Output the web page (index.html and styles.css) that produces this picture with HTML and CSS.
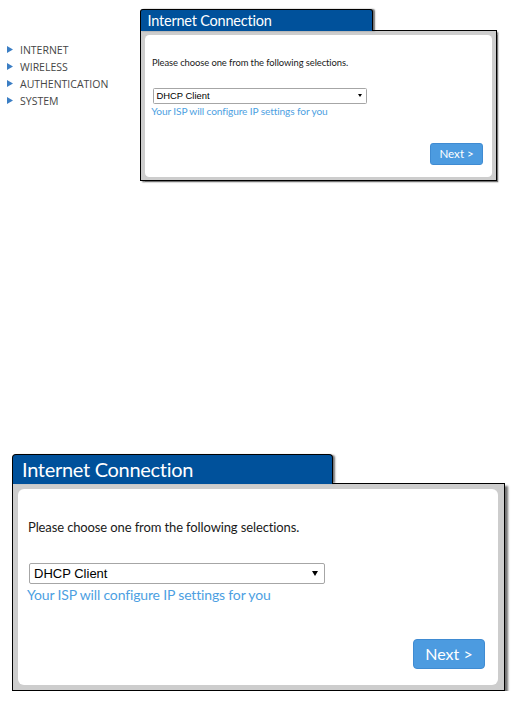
FILE: index.html
```html
<!DOCTYPE html>
<html lang="en">
<head>
<meta charset="utf-8">
<title>Internet Connection</title>
<link rel="stylesheet" href="styles.css">
</head>
<body>
<div class="top">
  <ul class="menu">
    <li><svg class="bullet" width="6" height="7" viewBox="0 0 6 7"><polygon points="0,0 6,3.5 0,7" fill="#3b7ec4"/></svg>INTERNET</li>
    <li><svg class="bullet" width="6" height="7" viewBox="0 0 6 7"><polygon points="0,0 6,3.5 0,7" fill="#3b7ec4"/></svg>WIRELESS</li>
    <li><svg class="bullet" width="6" height="7" viewBox="0 0 6 7"><polygon points="0,0 6,3.5 0,7" fill="#3b7ec4"/></svg>AUTHENTICATION</li>
    <li><svg class="bullet" width="6" height="7" viewBox="0 0 6 7"><polygon points="0,0 6,3.5 0,7" fill="#3b7ec4"/></svg>SYSTEM</li>
  </ul>
  <div class="panel small">
    <div class="tab">Internet Connection</div>
    <div class="frame">
      <div class="sheet">
        <p class="prompt">Please choose one from the following selections.</p>
        <div class="select-wrap">
          <select class="select">
            <option>DHCP Client</option>
            <option>Static IP</option>
            <option>PPPoE</option>
          </select>
        </div>
        <p class="hint">Your ISP will configure IP settings for you</p>
        <div class="actions"><button class="next" type="button">Next &gt;</button></div>
      </div>
    </div>
  </div>
</div>
<div class="bottom">
  <div class="panel">
    <div class="tab">Internet Connection</div>
    <div class="frame">
      <div class="sheet">
        <p class="prompt">Please choose one from the following selections.</p>
        <div class="select-wrap">
          <select class="select">
            <option>DHCP Client</option>
            <option>Static IP</option>
            <option>PPPoE</option>
          </select>
        </div>
        <p class="hint">Your ISP will configure IP settings for you</p>
        <div class="actions"><button class="next" type="button">Next &gt;</button></div>
      </div>
    </div>
  </div>
</div>
</body>
</html>
```
FILE: styles.css
```css
body {
  margin: 0;
  background: #fff;
  font-family: "Open Sans", "Noto Sans", sans-serif;
}

.top {
  display: flex;
  align-items: flex-start;
  padding-top: 9px;
}

.menu {
  list-style: none;
  margin: 32px 0 0;
  padding: 0 0 0 7px;
  width: 133px;
}

.menu li {
  display: flex;
  align-items: center;
  gap: 7px;
  height: 17px;
  font-size: 10.5px;
  color: #454545;
}

.bullet {
  flex: none;
}

.small {
  zoom: 0.725;
}

.bottom {
  margin-top: 273px;
  padding-left: 12px;
}

.panel {
  width: 493px;
  font-family: Lato, "Open Sans", sans-serif;
}

.tab {
  position: relative;
  box-sizing: border-box;
  width: 321px;
  height: 30px;
  margin-bottom: -1px;
  padding-left: 9px;
  border: 1px solid #000;
  border-bottom: 0;
  border-radius: 4px 4px 0 0;
  background: #00519b;
  color: #fff;
  font-size: 20px;
  line-height: 29px;
  letter-spacing: -0.3px;
  box-shadow: 3px 0 2px -1px rgba(0, 0, 0, 0.55);
}

.frame {
  border: 1px solid #000;
  background: #cdcdcd;
  padding: 5px 6px 5px 5px;
  box-shadow: 3px 3px 2px rgba(0, 0, 0, 0.55);
}

.sheet {
  background: #fff;
  border-radius: 6px;
  padding: 29px 13px 16px 10px;
}

.prompt {
  margin: 0;
  font-size: 13px;
  line-height: 18px;
  letter-spacing: -0.12px;
  color: #1a1a1a;
}

.select-wrap {
  position: relative;
  width: 296px;
  margin: 27px 0 0 1px;
}

.select {
  appearance: none;
  -webkit-appearance: none;
  display: block;
  box-sizing: border-box;
  width: 100%;
  height: 21px;
  margin: 0;
  padding: 0 0 0 4px;
  border: 1px solid #a6a6a6;
  border-radius: 2px;
  background: #fff;
  color: #000;
  font: 13px "Liberation Sans", Arial, sans-serif;
}

.select-wrap::after {
  content: "";
  position: absolute;
  right: 7px;
  top: 8px;
  border-left: 3px solid transparent;
  border-right: 3px solid transparent;
  border-top: 5px solid #000;
  pointer-events: none;
}

.hint {
  margin: 2px 0 0 -1px;
  font-size: 14px;
  line-height: 18px;
  letter-spacing: -0.16px;
  color: #4d9fe2;
}

.actions {
  display: flex;
  justify-content: flex-end;
  margin-top: 35px;
}

.next {
  box-sizing: border-box;
  width: 72px;
  height: 30px;
  padding: 0 0 2px;
  border: 1px solid #3f8bd2;
  border-radius: 4px;
  background: #4c9be0;
  color: #fff;
  font-family: Lato, "Open Sans", sans-serif;
  font-size: 16px;
}
```
